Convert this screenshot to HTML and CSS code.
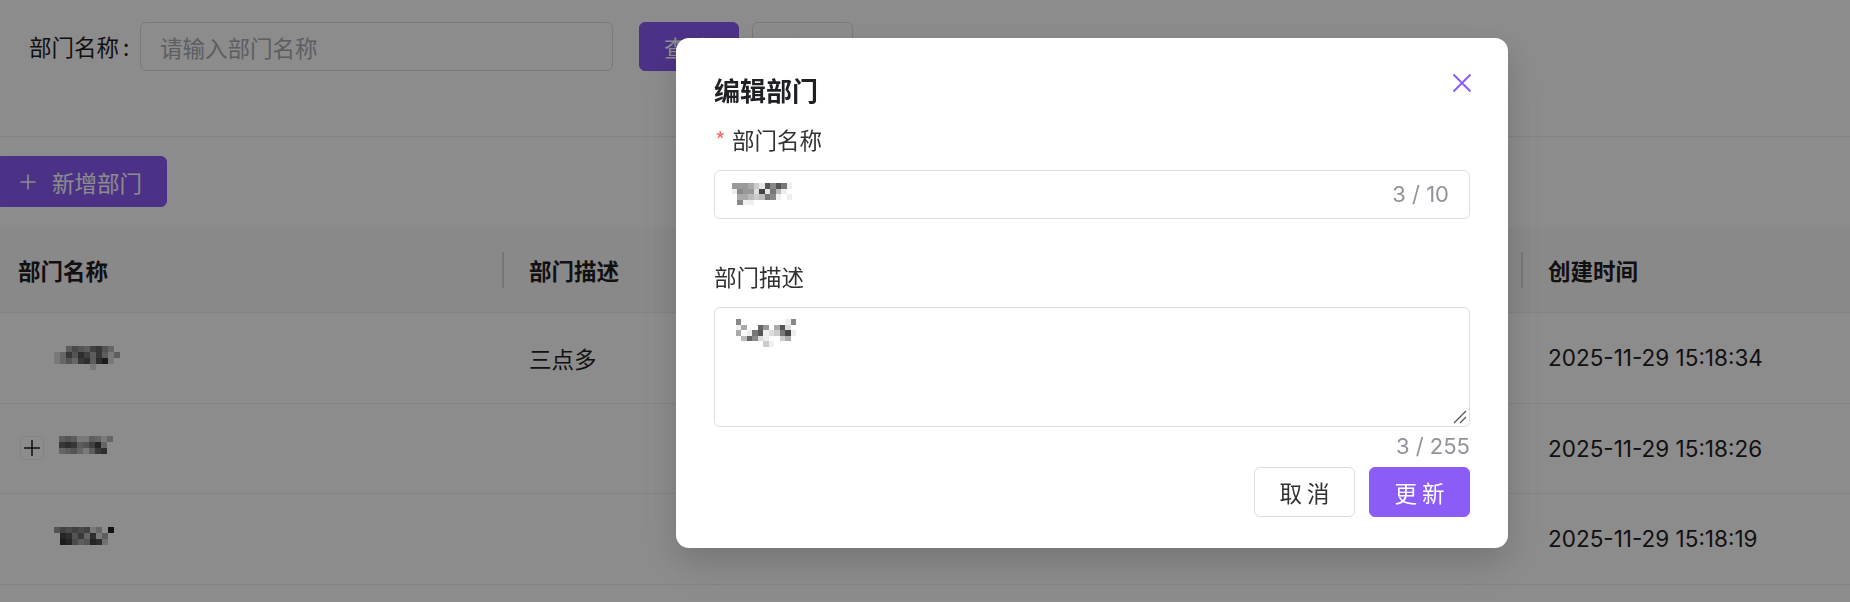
FILE: index.html
```html
<!DOCTYPE html>
<html lang="zh-CN">
<head>
<meta charset="utf-8">
<title>部门管理</title>
<link rel="stylesheet" href="styles.css">
</head>
<body>
<div class="page">
  <div class="search">
    <label class="search-label">部门名称<span class="colon">:</span></label>
    <div class="field search-input"><span class="placeholder">请输入部门名称</span></div>
    <button class="btn btn-primary btn-query">查 询</button>
    <button class="btn btn-default btn-reset">重 置</button>
  </div>

  <div class="toolbar">
    <button class="btn btn-primary btn-add">
      <svg class="plus-ico" viewBox="0 0 18 18" width="18" height="18"><path d="M9 1.5V16.5M1.5 9H16.5" stroke="#fff" stroke-width="1.6" fill="none"/></svg>
      <span>新增部门</span>
    </button>
  </div>

  <div class="table">
    <div class="tr thead">
      <div class="td">部门名称</div>
      <div class="td sep">部门描述</div>
      <div class="td sep">创建时间</div>
    </div>
    <div class="tr">
      <div class="td name indent">
        <svg class="mosaic" viewBox="0 0 11 4" width="66" height="24" shape-rendering="crispEdges">
          <rect x="2" y="0" width="1" height="1" fill="#aaa"/><rect x="3" y="0" width="1" height="1" fill="#888"/><rect x="4" y="0" width="1" height="1" fill="#999"/><rect x="5" y="0" width="1" height="1" fill="#aaa"/><rect x="6" y="0" width="1" height="1" fill="#777"/><rect x="7" y="0" width="1" height="1" fill="#666"/><rect x="8" y="0" width="1" height="1" fill="#999"/><rect x="9" y="0" width="1" height="1" fill="#bbb"/>
          <rect x="0" y="1" width="1" height="1" fill="#ddd"/><rect x="1" y="1" width="1" height="1" fill="#bbb"/><rect x="2" y="1" width="1" height="1" fill="#666"/><rect x="3" y="1" width="1" height="1" fill="#999"/><rect x="4" y="1" width="1" height="1" fill="#555"/><rect x="5" y="1" width="1" height="1" fill="#777"/><rect x="6" y="1" width="1" height="1" fill="#aaa"/><rect x="7" y="1" width="1" height="1" fill="#666"/><rect x="8" y="1" width="1" height="1" fill="#aaa"/><rect x="9" y="1" width="1" height="1" fill="#ddd"/><rect x="10" y="1" width="1" height="1" fill="#aaa"/>
          <rect x="0" y="2" width="1" height="1" fill="#ddd"/><rect x="1" y="2" width="1" height="1" fill="#bbb"/><rect x="2" y="2" width="1" height="1" fill="#999"/><rect x="3" y="2" width="1" height="1" fill="#bbb"/><rect x="4" y="2" width="1" height="1" fill="#666"/><rect x="5" y="2" width="1" height="1" fill="#555"/><rect x="6" y="2" width="1" height="1" fill="#aaa"/><rect x="7" y="2" width="1" height="1" fill="#555"/><rect x="8" y="2" width="1" height="1" fill="#333"/><rect x="9" y="2" width="1" height="1" fill="#ddd"/>
          <rect x="6" y="3" width="1" height="1" fill="#ddd"/>
        </svg>
      </div>
      <div class="td desc">三点多</div>
      <div class="td date">2025-11-29 15:18:34</div>
    </div>
    <div class="tr">
      <div class="td name">
        <span class="expand"><svg viewBox="0 0 18 18" width="18" height="18"><path d="M9 1V17M1 9H17" stroke="#1f1f1f" stroke-width="1.5" fill="none"/></svg></span>
        <svg class="mosaic" viewBox="0 0 10 4" width="60" height="24" shape-rendering="crispEdges">
          <rect x="0" y="0" width="1" height="1" fill="#aaa"/><rect x="1" y="0" width="1" height="1" fill="#999"/><rect x="2" y="0" width="1" height="1" fill="#aaa"/><rect x="3" y="0" width="1" height="1" fill="#ddd"/><rect x="4" y="0" width="1" height="1" fill="#ddd"/><rect x="5" y="0" width="1" height="1" fill="#aaa"/><rect x="6" y="0" width="1" height="1" fill="#bbb"/><rect x="7" y="0" width="1" height="1" fill="#ddd"/><rect x="8" y="0" width="1" height="1" fill="#bbb"/>
          <rect x="0" y="1" width="1" height="1" fill="#666"/><rect x="1" y="1" width="1" height="1" fill="#555"/><rect x="2" y="1" width="1" height="1" fill="#666"/><rect x="3" y="1" width="1" height="1" fill="#aaa"/><rect x="4" y="1" width="1" height="1" fill="#999"/><rect x="5" y="1" width="1" height="1" fill="#777"/><rect x="6" y="1" width="1" height="1" fill="#444"/><rect x="7" y="1" width="1" height="1" fill="#bbb"/>
          <rect x="0" y="2" width="1" height="1" fill="#bbb"/><rect x="1" y="2" width="1" height="1" fill="#aaa"/><rect x="2" y="2" width="1" height="1" fill="#999"/><rect x="3" y="2" width="1" height="1" fill="#bbb"/><rect x="4" y="2" width="1" height="1" fill="#ddd"/><rect x="5" y="2" width="1" height="1" fill="#aaa"/><rect x="6" y="2" width="1" height="1" fill="#666"/><rect x="7" y="2" width="1" height="1" fill="#555"/>
        </svg>
      </div>
      <div class="td desc"></div>
      <div class="td date">2025-11-29 15:18:26</div>
    </div>
    <div class="tr">
      <div class="td name indent">
        <svg class="mosaic" viewBox="0 0 10 4" width="60" height="24" shape-rendering="crispEdges">
          <rect x="0" y="0" width="1" height="1" fill="#999"/><rect x="1" y="0" width="1" height="1" fill="#777"/><rect x="2" y="0" width="1" height="1" fill="#888"/><rect x="3" y="0" width="1" height="1" fill="#777"/><rect x="4" y="0" width="1" height="1" fill="#888"/><rect x="5" y="0" width="1" height="1" fill="#777"/><rect x="6" y="0" width="1" height="1" fill="#ddd"/><rect x="7" y="0" width="1" height="1" fill="#bbb"/><rect x="9" y="0" width="1" height="1" fill="#222"/>
          <rect x="1" y="1" width="1" height="1" fill="#444"/><rect x="2" y="1" width="1" height="1" fill="#555"/><rect x="3" y="1" width="1" height="1" fill="#999"/><rect x="4" y="1" width="1" height="1" fill="#666"/><rect x="5" y="1" width="1" height="1" fill="#bbb"/><rect x="6" y="1" width="1" height="1" fill="#555"/><rect x="7" y="1" width="1" height="1" fill="#ddd"/><rect x="8" y="1" width="1" height="1" fill="#aaa"/>
          <rect x="1" y="2" width="1" height="1" fill="#333"/><rect x="2" y="2" width="1" height="1" fill="#444"/><rect x="3" y="2" width="1" height="1" fill="#888"/><rect x="4" y="2" width="1" height="1" fill="#aaa"/><rect x="5" y="2" width="1" height="1" fill="#999"/><rect x="6" y="2" width="1" height="1" fill="#444"/><rect x="7" y="2" width="1" height="1" fill="#555"/><rect x="8" y="2" width="1" height="1" fill="#ccc"/>
        </svg>
      </div>
      <div class="td desc"></div>
      <div class="td date">2025-11-29 15:18:19</div>
    </div>
    <div class="tr last">
      <div class="td"></div><div class="td"></div><div class="td"></div>
    </div>
  </div>
</div>

<div class="overlay">
  <div class="dialog" role="dialog">
    <div class="dialog-title">编辑部门</div>
    <button class="dialog-close" aria-label="关闭">
      <svg viewBox="0 0 20 20" width="20" height="20"><path d="M1.5 1.5L18.5 18.5M18.5 1.5L1.5 18.5" stroke="#8b5cf6" stroke-width="2" fill="none"/></svg>
    </button>

    <div class="form-item first">
      <div class="form-label"><span class="req">*</span>部门名称</div>
      <div class="field modal-input">
        <svg class="mosaic" viewBox="0 0 12 4" width="67" height="22" shape-rendering="crispEdges">
          <rect x="0" y="0" width="1" height="1" fill="#999"/><rect x="1" y="0" width="1" height="1" fill="#9a9a9a"/><rect x="2" y="0" width="1" height="1" fill="#999"/><rect x="3" y="0" width="1" height="1" fill="#aaa"/><rect x="4" y="0" width="1" height="1" fill="#ccc"/><rect x="5" y="0" width="1" height="1" fill="#e5e5e5"/><rect x="6" y="0" width="1" height="1" fill="#555"/><rect x="7" y="0" width="1" height="1" fill="#888"/><rect x="8" y="0" width="1" height="1" fill="#555"/><rect x="9" y="0" width="1" height="1" fill="#777"/><rect x="10" y="0" width="1" height="1" fill="#eee"/>
          <rect x="0" y="1" width="1" height="1" fill="#eee"/><rect x="1" y="1" width="1" height="1" fill="#888"/><rect x="2" y="1" width="1" height="1" fill="#999"/><rect x="3" y="1" width="1" height="1" fill="#999"/><rect x="4" y="1" width="1" height="1" fill="#ddd"/><rect x="5" y="1" width="1" height="1" fill="#444"/><rect x="6" y="1" width="1" height="1" fill="#e5e5e5"/><rect x="7" y="1" width="1" height="1" fill="#777"/><rect x="8" y="1" width="1" height="1" fill="#bbb"/><rect x="9" y="1" width="1" height="1" fill="#eee"/>
          <rect x="1" y="2" width="1" height="1" fill="#aaa"/><rect x="2" y="2" width="1" height="1" fill="#aaa"/><rect x="3" y="2" width="1" height="1" fill="#bbb"/><rect x="4" y="2" width="1" height="1" fill="#ccc"/><rect x="5" y="2" width="1" height="1" fill="#bbb"/><rect x="6" y="2" width="1" height="1" fill="#777"/><rect x="7" y="2" width="1" height="1" fill="#888"/><rect x="8" y="2" width="1" height="1" fill="#eee"/><rect x="10" y="2" width="1" height="1" fill="#eee"/>
          <rect x="1" y="3" width="1" height="1" fill="#888"/><rect x="2" y="3" width="1" height="1" fill="#f2f2f2"/><rect x="3" y="3" width="1" height="1" fill="#eee"/>
        </svg>
        <span class="count">3 / 10</span>
      </div>
    </div>

    <div class="form-item second">
      <div class="form-label">部门描述</div>
      <div class="field modal-textarea">
        <svg class="mosaic" viewBox="0 0 11 5" width="60" height="28" shape-rendering="crispEdges">
          <rect x="0" y="0" width="1" height="1" fill="#888"/><rect x="9" y="0" width="1" height="1" fill="#eee"/><rect x="10" y="0" width="1" height="1" fill="#888"/>
          <rect x="0" y="1" width="1" height="1" fill="#eee"/><rect x="1" y="1" width="1" height="1" fill="#aaa"/><rect x="4" y="1" width="1" height="1" fill="#666"/><rect x="5" y="1" width="1" height="1" fill="#999"/><rect x="7" y="1" width="1" height="1" fill="#aaa"/><rect x="8" y="1" width="1" height="1" fill="#555"/><rect x="9" y="1" width="1" height="1" fill="#ddd"/>
          <rect x="0" y="2" width="1" height="1" fill="#aaa"/><rect x="2" y="2" width="1" height="1" fill="#eee"/><rect x="3" y="2" width="1" height="1" fill="#777"/><rect x="4" y="2" width="1" height="1" fill="#555"/><rect x="5" y="2" width="1" height="1" fill="#eee"/><rect x="6" y="2" width="1" height="1" fill="#ddd"/><rect x="7" y="2" width="1" height="1" fill="#ccc"/><rect x="8" y="2" width="1" height="1" fill="#777"/><rect x="9" y="2" width="1" height="1" fill="#444"/><rect x="10" y="2" width="1" height="1" fill="#eee"/>
          <rect x="1" y="3" width="1" height="1" fill="#bbb"/><rect x="2" y="3" width="1" height="1" fill="#666"/><rect x="3" y="3" width="1" height="1" fill="#888"/><rect x="4" y="3" width="1" height="1" fill="#ddd"/><rect x="5" y="3" width="1" height="1" fill="#eee"/><rect x="8" y="3" width="1" height="1" fill="#ccc"/><rect x="9" y="3" width="1" height="1" fill="#aaa"/>
          <rect x="5" y="4" width="1" height="1" fill="#ccc"/><rect x="6" y="4" width="1" height="1" fill="#eee"/>
        </svg>
        <svg class="grip" viewBox="0 0 16 16" width="16" height="16"><path d="M15 3L3 15M15 9L9 15" stroke="#555" stroke-width="1.3" fill="none"/></svg>
      </div>
      <div class="count-below">3 / 255</div>
    </div>

    <div class="dialog-footer">
      <button class="btn btn-default">取 消</button>
      <button class="btn btn-primary">更 新</button>
    </div>
  </div>
</div>
</body>
</html>
```
FILE: styles.css
```css
* { box-sizing: border-box; }
html, body { margin: 0; padding: 0; }
body {
  width: 1850px;
  height: 602px;
  overflow: hidden;
  background: #ffffff;
  font-family: "Inter", "Noto Sans CJK SC", sans-serif;
  font-size: 22.5px;
  color: #303133;
}
.page { width: 1850px; height: 602px; overflow: hidden; }

/* search bar */
.search {
  height: 137px;
  border-bottom: 1px solid #ebeef5;
  padding: 22px 0 0 29px;
  display: flex;
  align-items: flex-start;
}
.search-label {
  flex: 0 0 111px;
  height: 49px;
  line-height: 49px;
  font-family: "Noto Sans CJK SC", sans-serif;
  color: #1f2023;
}
.colon { margin-left: 4px; }
.field {
  border: 1.5px solid #dcdfe6;
  border-radius: 6px;
  background: #fff;
}
.search-input {
  width: 473px;
  height: 49px;
  padding-left: 19px;
  display: flex;
  align-items: center;
}
.placeholder { color: #a8abb2; font-family: "Noto Sans CJK SC", sans-serif; }

.btn {
  height: 49px;
  border-radius: 6px;
  font-family: "Noto Sans CJK SC", sans-serif;
  font-size: 22.5px;
  padding: 0;
  cursor: pointer;
  display: inline-flex;
  align-items: center;
  justify-content: center;
}
.btn-primary { background: #8b5cf6; border: 1.5px solid #8b5cf6; color: #fff; }
.btn-default { background: #fff; border: 1.5px solid #dcdfe6; color: #303133; }
.btn-query { width: 100px; margin-left: 26px; }
.btn-reset { width: 101px; margin-left: 13px; }

/* toolbar */
.toolbar { padding: 19px 0 20px; }
.btn-add {
  margin-left: -4px;
  width: 171px;
  height: 51px;
  justify-content: flex-start;
  padding-left: 22px;
  gap: 15px;
}
.plus-ico { display: block; }

/* table */
.table { width: 1850px; }
.tr {
  display: grid;
  grid-template-columns: 511px 1019px 1fr;
  height: 90.5px;
  border-bottom: 1px solid #ebeef5;
  align-items: center;
}
.tr.last { height: 40px; }
.thead {
  height: 86px;
  background: #fafafa;
  font-weight: 700;
  font-family: "Noto Sans CJK SC", sans-serif;
  color: #1f2023;
}
.td {
  padding-left: 18px;
  position: relative;
  display: flex;
  align-items: center;
  white-space: nowrap;
}
.sep::before {
  content: "";
  position: absolute;
  left: -9px;
  top: 50%;
  margin-top: -18px;
  width: 1.5px;
  height: 36px;
  background: #d4d7de;
}
.name.indent { padding-left: 54px; }
.name .expand {
  width: 24px;
  height: 24px;
  margin-left: 2px;
  margin-right: 15px;
  border: 1px solid #f0f0f0;
  border-radius: 5px;
  display: flex;
  align-items: center;
  justify-content: center;
}
.name .expand svg { display: block; }
.mosaic { display: block; }
.desc { font-family: "Noto Sans CJK SC", sans-serif; color: #1f2023; }
.date { font-size: 22.5px; color: #1f2023; }

/* overlay + dialog */
.overlay {
  position: fixed;
  inset: 0;
  background: rgba(0, 0, 0, 0.45);
  padding: 38px 0 0 676px;
}
.dialog {
  position: relative;
  width: 832px;
  background: #fff;
  border-radius: 13px;
  padding: 34px 38px 31px;
  box-shadow: 0 18px 48px 6px rgba(0,0,0,0.06), 0 12px 30px rgba(0,0,0,0.12);
}
.dialog-title {
  font-family: "Noto Sans CJK SC", sans-serif;
  font-size: 26px;
  line-height: 36px;
  font-weight: 700;
  color: #1f2023;
}
.dialog-close {
  position: absolute;
  top: 35px;
  right: 36px;
  width: 20px;
  height: 20px;
  padding: 0;
  border: 0;
  background: transparent;
  cursor: pointer;
}
.dialog-close svg { display: block; }
.form-item.first { margin-top: 15px; }
.form-item.second { margin-top: 41.5px; }
.form-label {
  font-family: "Noto Sans CJK SC", sans-serif;
  line-height: 33px;
  height: 33px;
  margin-bottom: 13.5px;
  color: #303133;
}
.req {
  display: inline-block;
  width: 18px;
  color: #f56c6c;
  padding-left: 1px;
}
.modal-input {
  height: 49px;
  padding: 0 20px 0 16px;
  display: flex;
  align-items: center;
  justify-content: space-between;
}
.count { font-size: 22px; color: #909399; }
.modal-textarea {
  position: relative;
  height: 120px;
  padding: 11px 0 0 21px;
}
.grip { position: absolute; right: 2px; bottom: 2px; display: block; }
.count-below {
  margin-top: 4px;
  height: 30px;
  line-height: 30px;
  text-align: right;
  font-size: 22px;
  color: #909399;
}
.dialog-footer {
  margin-top: 6px;
  display: flex;
  justify-content: flex-end;
  gap: 14px;
}
.dialog-footer .btn { width: 101px; height: 50px; }
```
